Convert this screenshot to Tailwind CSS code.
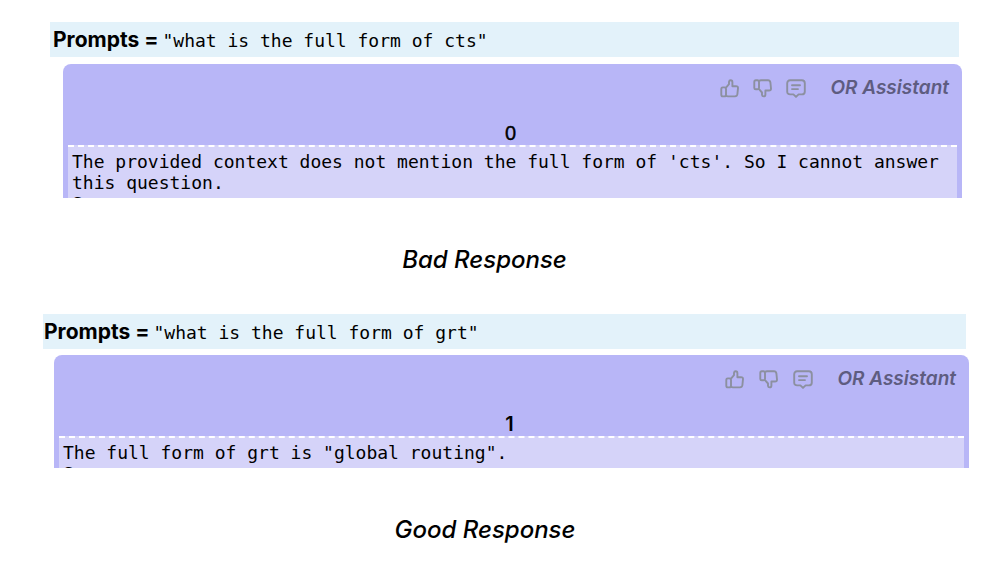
<!DOCTYPE html>
<html lang="en">
<head>
<meta charset="utf-8">
<meta name="viewport" content="width=device-width, initial-scale=1">
<title>Assistant responses</title>
<script src="https://cdn.jsdelivr.net/npm/@tailwindcss/browser@4"></script>
</head>
<body class="bg-white font-['Inter',sans-serif] text-black">
<svg class="hidden" aria-hidden="true">
  <symbol id="up" viewBox="0 0 20 20" fill="none" stroke="currentColor" stroke-width="1.9" stroke-linejoin="round" stroke-linecap="round">
    <path d="M6 8.6 9 5.2V2.8Q9.2 1.3 10.7 1.3 12.4 1.3 12.4 3.2V7.2H16Q18.2 7.2 18 9.2L17.4 15.2Q17 17.4 15 17.4H8Q6.8 17.4 6 16.8M2.8 8.4H4.4Q6 8.4 6 9.8V15.8Q6 17.4 4.4 17.4H2.8Q1.3 17.4 1.3 15.8V9.8Q1.3 8.4 2.8 8.4Z"/>
  </symbol>
  <symbol id="down" viewBox="0 0 20 20" fill="none" stroke="currentColor" stroke-width="1.9" stroke-linejoin="round" stroke-linecap="round">
    <path d="M6 10.1 9 13.5V15.9Q9.2 17.4 10.7 17.4 12.4 17.4 12.4 15.5V11.5H16Q18.2 11.5 18 9.5L17.4 3.5Q17 1.3 15 1.3H8Q6.8 1.3 6 1.9M2.8 10.3H4.4Q6 10.3 6 8.9V2.9Q6 1.3 4.4 1.3H2.8Q1.3 1.3 1.3 2.9V8.9Q1.3 10.3 2.8 10.3Z"/>
  </symbol>
  <symbol id="note" viewBox="0 0 20 20" fill="none" stroke="currentColor" stroke-width="1.9" stroke-linejoin="round" stroke-linecap="round">
    <path d="M4.2 1.3H15.8Q18.8 1.3 18.8 4.3V12.4Q18.8 15.4 15.8 15.4H12.6L10 17.9 7.4 15.4H4.2Q1.2 15.4 1.2 12.4V4.3Q1.2 1.3 4.2 1.3ZM6 6.3H14M6 10.1H12"/>
  </symbol>
</svg>
<main>
  <section class="pt-[22px]">
    <p class="ml-[50px] mr-[49px] flex h-[35px] items-center gap-1 bg-[#e3f2fa] px-[3px] whitespace-nowrap">
      <strong class="text-[21px] font-bold">Prompts =</strong>
      <code class="pt-0.5 font-['DejaVu_Sans_Mono',monospace] text-[18px]">"what is the full form of cts"</code>
    </p>
    <article class="ml-[63px] mr-[46px] mt-[7px] h-[134px] overflow-hidden rounded-t-lg bg-[#b8b6f7] px-[5px]">
      <header class="flex h-[49px] items-center justify-end pr-2 text-[#8c90a0]">
        <div class="flex gap-[13px]">
          <button type="button" aria-label="Good response"><svg class="size-5"><use href="#up"/></svg></button>
          <button type="button" aria-label="Bad response"><svg class="size-5"><use href="#down"/></svg></button>
          <button type="button" aria-label="Add comment"><svg class="size-5"><use href="#note"/></svg></button>
        </div>
        <h2 class="ml-6 text-[19px] font-semibold italic text-[#5e5c80]">OR Assistant</h2>
      </header>
      <p class="pt-2 pr-1 text-center font-['Liberation_Sans',sans-serif] text-[20px] leading-6 [-webkit-text-stroke:0.4px_black]">0</p>
      <div class="h-24 border-t-2 border-dashed border-white bg-[#d5d3f9] px-1 pt-1 font-['DejaVu_Sans_Mono',monospace] text-[18px] leading-[21px]">
        <p>The provided context does not mention the full form of 'cts'. So I cannot answer this question.</p>
        <p>S</p>
      </div>
    </article>
    <h3 class="mt-[46px] pr-[39px] text-center text-[24px] leading-8 font-medium italic [font-feature-settings:'cv11']">Bad Response</h3>
  </section>
  <section class="pt-[38px]">
    <p class="ml-[43px] mr-[42px] flex h-[35px] items-center gap-1 bg-[#e3f2fa] px-px whitespace-nowrap">
      <strong class="text-[21px] font-bold">Prompts =</strong>
      <code class="pt-0.5 font-['DejaVu_Sans_Mono',monospace] text-[18px]">"what is the full form of grt"</code>
    </p>
    <article class="ml-[54px] mr-[39px] mt-[6px] h-[113px] overflow-hidden rounded-t-lg bg-[#b8b6f7] px-[5px]">
      <header class="flex h-[49px] items-center justify-end pr-2 text-[#8c90a0]">
        <div class="flex gap-[14px]">
          <button type="button" aria-label="Good response"><svg class="size-5"><use href="#up"/></svg></button>
          <button type="button" aria-label="Bad response"><svg class="size-5"><use href="#down"/></svg></button>
          <button type="button" aria-label="Add comment"><svg class="size-5"><use href="#note"/></svg></button>
        </div>
        <h2 class="ml-6 text-[19px] font-semibold italic text-[#5e5c80]">OR Assistant</h2>
      </header>
      <p class="pt-2 pr-1 text-center text-[20px] leading-6 font-semibold">1</p>
      <div class="h-24 border-t-2 border-dashed border-white bg-[#d5d3f9] px-1 pt-1 font-['DejaVu_Sans_Mono',monospace] text-[18px] leading-[21px]">
        <p>The full form of grt is "global routing".</p>
        <p>S</p>
      </div>
    </article>
    <h3 class="mt-[46px] pr-[38px] text-center text-[24px] leading-8 font-medium italic [font-feature-settings:'cv11']">Good Response</h3>
  </section>
</main>
</body>
</html>
